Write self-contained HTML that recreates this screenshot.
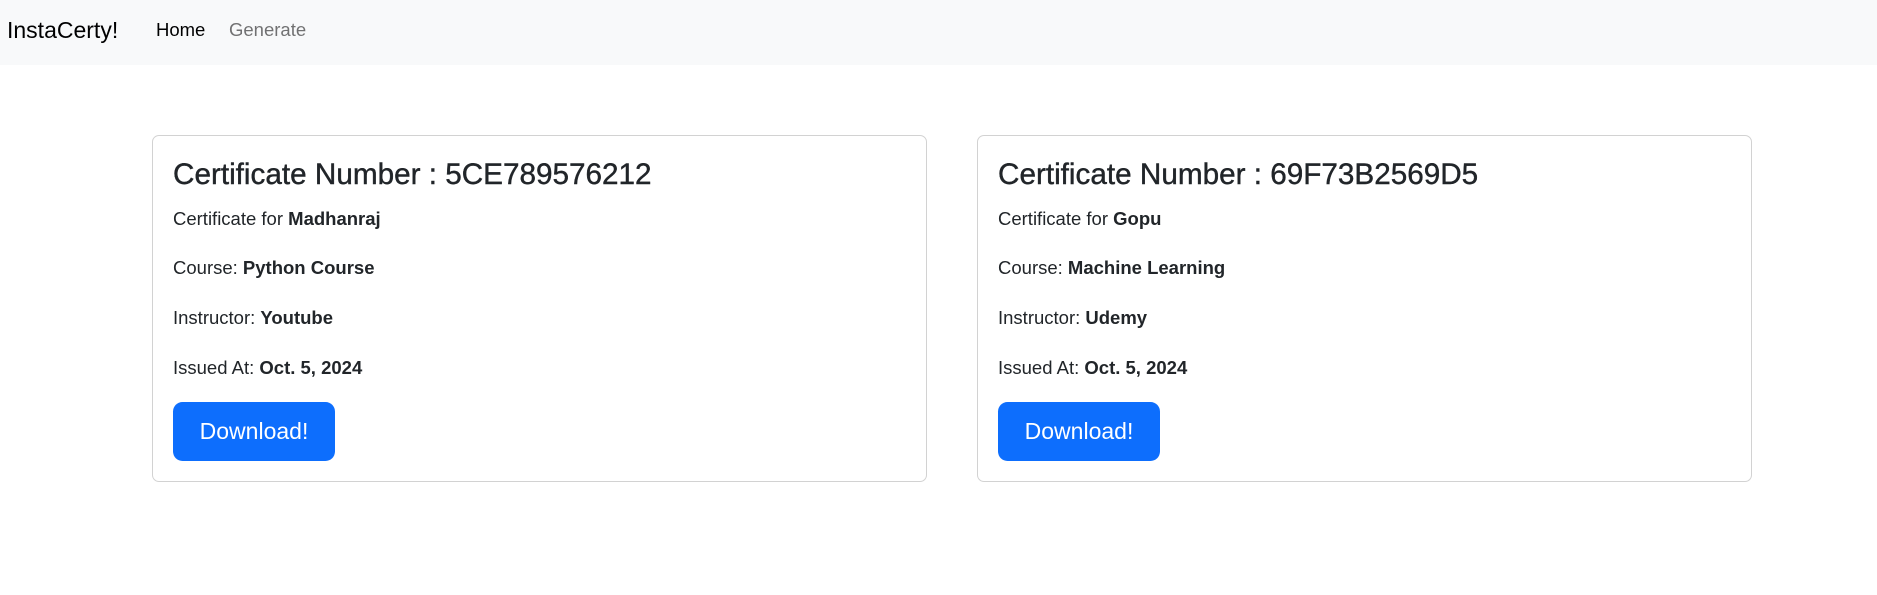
<!DOCTYPE html>
<html><head><meta charset="utf-8"><style>
*{box-sizing:border-box;margin:0;padding:0}
body{width:1877px;height:595px;background:#fff;font-family:"Liberation Sans",sans-serif;color:#212529;font-size:19.2px;line-height:1.5;position:relative;overflow:hidden}
.nav{position:absolute;left:0;top:0;width:1877px;height:65px;background:#f8f9fa}
.brand{position:absolute;left:7px;top:15px;font-size:23px;line-height:30px;color:#000}
.nl{position:absolute;top:17px;font-size:18.5px;line-height:26px}
.card{position:absolute;top:135px;width:775px;height:347px;border:1.2px solid rgba(0,0,0,.175);border-radius:7px;padding:19px 20px}
h3{font-size:29.7px;font-weight:400;line-height:40px;margin-bottom:9.6px;-webkit-text-stroke:0.4px #212529}
p{margin-bottom:21px;font-size:18.5px;line-height:28.8px}
b{font-weight:700}
.btn{display:inline-block;background:#0d6efd;color:#fff;border-radius:9.6px;font-size:23px;line-height:36px;padding:11px 19px;width:162px;height:59px;text-align:center;margin-top:-2px}
</style></head><body>
<div class="nav">
<div class="brand">InstaCerty!</div>
<div class="nl" style="left:156px;color:#000">Home</div>
<div class="nl" style="left:229px;color:rgba(0,0,0,.55)">Generate</div>
</div>
<div class="card" style="left:152px">
<h3>Certificate Number : 5CE789576212</h3>
<p>Certificate for <b>Madhanraj</b></p>
<p>Course: <b>Python Course</b></p>
<p>Instructor: <b>Youtube</b></p>
<p>Issued At: <b>Oct. 5, 2024</b></p>
<div class="btn">Download!</div>
</div>
<div class="card" style="left:977px">
<h3>Certificate Number : 69F73B2569D5</h3>
<p>Certificate for <b>Gopu</b></p>
<p>Course: <b>Machine Learning</b></p>
<p>Instructor: <b>Udemy</b></p>
<p>Issued At: <b>Oct. 5, 2024</b></p>
<div class="btn">Download!</div>
</div>
</body></html>
